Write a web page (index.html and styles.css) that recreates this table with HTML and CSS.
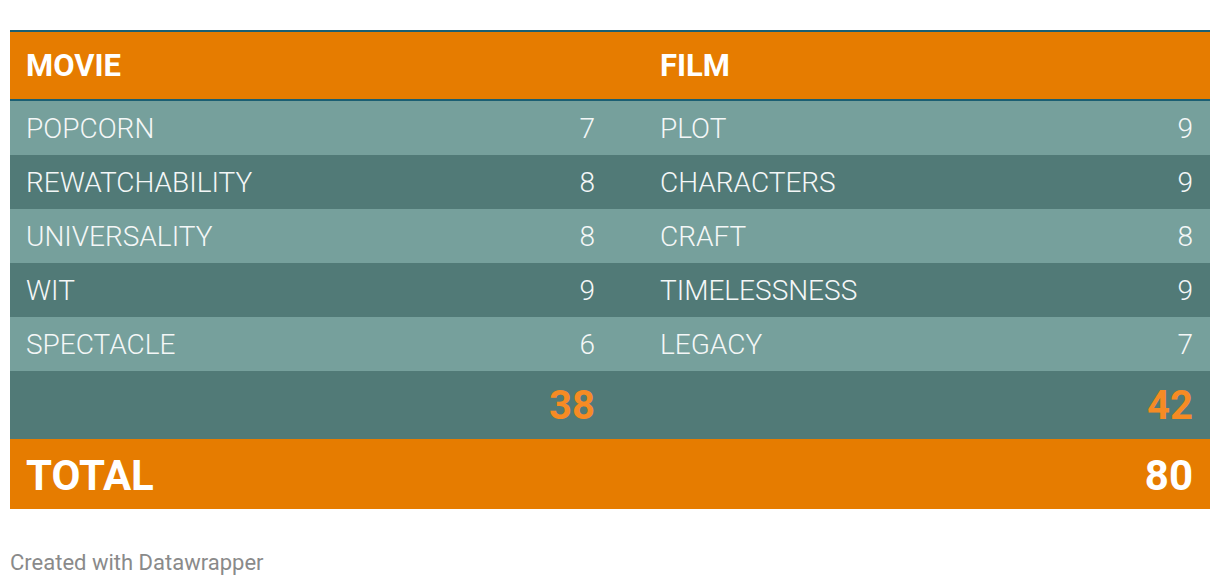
FILE: index.html
```html
<!DOCTYPE html>
<html>
<head>
<meta charset="utf-8">
<link rel="stylesheet" href="styles.css">
</head>
<body>
<div class="table">
  <div class="row head">
    <div class="half left"><span>MOVIE</span></div>
    <div class="half right"><span>FILM</span></div>
  </div>
  <div class="row light">
    <div class="half left"><span>POPCORN</span><span>7</span></div>
    <div class="half right"><span>PLOT</span><span>9</span></div>
  </div>
  <div class="row dark">
    <div class="half left"><span>REWATCHABILITY</span><span>8</span></div>
    <div class="half right"><span>CHARACTERS</span><span>9</span></div>
  </div>
  <div class="row light">
    <div class="half left"><span>UNIVERSALITY</span><span>8</span></div>
    <div class="half right"><span>CRAFT</span><span>8</span></div>
  </div>
  <div class="row dark">
    <div class="half left"><span>WIT</span><span>9</span></div>
    <div class="half right"><span>TIMELESSNESS</span><span>9</span></div>
  </div>
  <div class="row light">
    <div class="half left"><span>SPECTACLE</span><span>6</span></div>
    <div class="half right"><span>LEGACY</span><span>7</span></div>
  </div>
  <div class="row sum">
    <div class="half left"><span></span><span>38</span></div>
    <div class="half right"><span></span><span>42</span></div>
  </div>
  <div class="row total">
    <span>TOTAL</span><span>80</span>
  </div>
</div>
<div class="credit">Created with Datawrapper</div>
</body>
</html>
```
FILE: styles.css
```css
html, body {
  margin: 0;
  padding: 0;
  background: #ffffff;
}
body {
  padding: 30px 10px 0 10px;
  font-family: Roboto, "Liberation Sans", sans-serif;
}
.table {
  width: 1200px;
  border-top: 2px solid #1b5f73;
}
.row {
  display: grid;
  grid-template-columns: 600px 600px;
  color: #f4f7f7;
}
.half {
  display: flex;
  align-items: center;
  justify-content: space-between;
}
.half.left {
  padding: 0 15px 0 16px;
}
.half.right {
  padding: 0 17px 0 50px;
}
.head {
  height: 67px;
  background: #e67c00;
  border-bottom: 2px solid #1b5f73;
  font-weight: 700;
  font-size: 31px;
  color: #ffffff;
}
.light, .dark {
  height: 54px;
  font-weight: 300;
  font-size: 28px;
}
.light .half, .dark .half {
  padding-top: 1px;
}
.light {
  background: #76a09c;
}
.dark {
  background: #517a77;
}
.sum {
  height: 68px;
  background: #517a77;
  font-weight: 700;
  font-size: 40px;
  color: #f68b24;
}
.total {
  display: flex;
  align-items: center;
  justify-content: space-between;
  height: 70px;
  padding: 2px 17px 0 16px;
  box-sizing: border-box;
  background: #e67c00;
  font-weight: 700;
  font-size: 42px;
  color: #ffffff;
}
.credit {
  margin-top: 41px;
  font-size: 22px;
  color: #8a8a8a;
}
```
